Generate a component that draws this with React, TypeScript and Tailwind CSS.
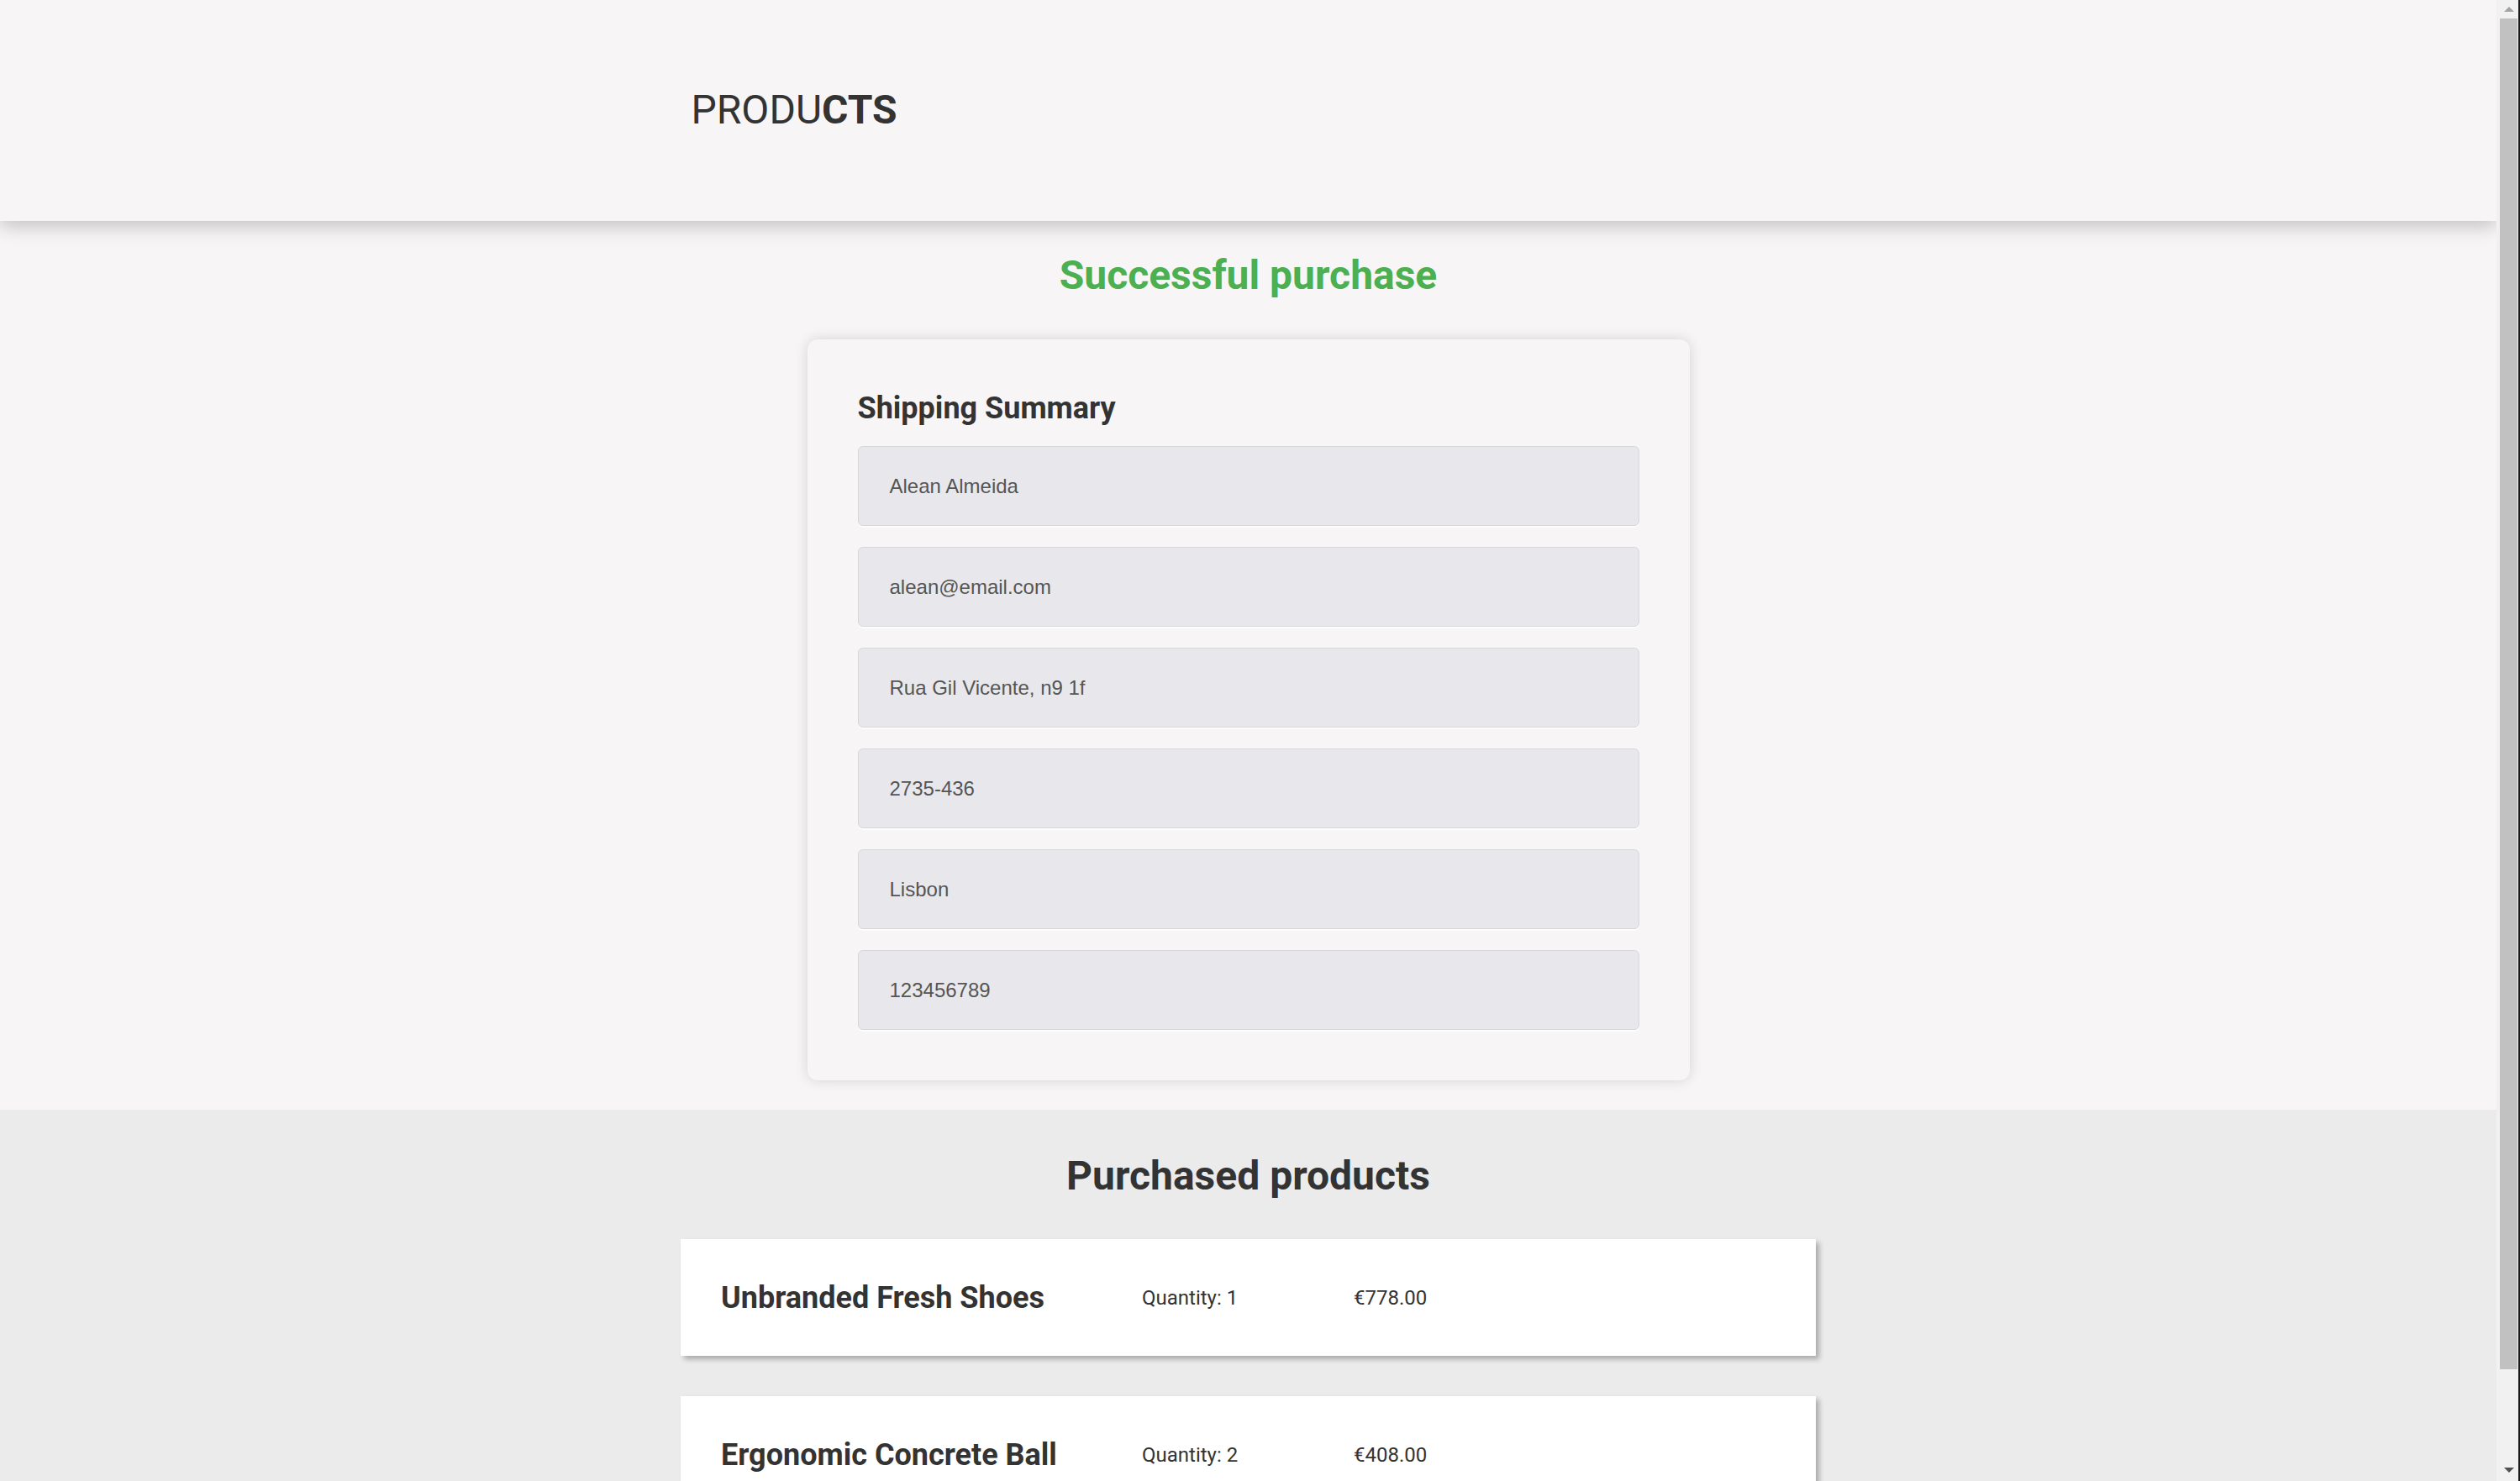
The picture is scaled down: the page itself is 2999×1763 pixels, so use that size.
const shipping = [
    "Alean Almeida",
    "alean@email.com",
    "Rua Gil Vicente, n9 1f",
    "2735-436",
    "Lisbon",
    "123456789",
];

const products = [
    { name: "Unbranded Fresh Shoes", quantity: 1, price: "€778.00" },
    { name: "Ergonomic Concrete Ball", quantity: 2, price: "€408.00" },
];

const ProductRow: React.FC<{ name: string; quantity: number; price: string }> = (p) => {
    return <div className="bg-white h-[139px] flex items-center pl-[48px] shadow-[4px_4px_6px_rgba(0,0,0,0.28)]">
        <h3 className="w-[501px] text-[36px] font-bold text-[#333] font-['Roboto',sans-serif]">{p.name}</h3>
        <span className="w-[252px] text-[24px] text-[#333] font-['Roboto',sans-serif]">Quantity: {p.quantity}</span>
        <span className="text-[24px] text-[#333] font-['Roboto',sans-serif]">{p.price}</span>
    </div>
}

const Scrollbar = () => {
    return <div className="flex h-full shrink-0">
        <div className="w-[26px] h-full bg-[#f1f1f1] flex flex-col items-end">
            <div className="h-[22px] w-[22px] flex items-center justify-center">
                <span className="w-0 h-0 border-l-[6px] border-r-[6px] border-b-[6px] border-l-transparent border-r-transparent border-b-[#a3a3a3]" />
            </div>
            <div className="w-[21px] mr-[1px] h-[1608px] bg-[#c1c1c1]" />
            <div className="flex-1 w-[22px] flex items-end justify-center pb-[10px]">
                <span className="w-0 h-0 border-l-[6px] border-r-[6px] border-t-[6px] border-l-transparent border-r-transparent border-t-[#505050]" />
            </div>
        </div>
        <div className="w-[2px] h-full bg-[#1c1c1c]" />
    </div>
}

export default function App() {
    return <div className="h-[1763px] w-full flex overflow-hidden bg-[#f7f5f6] font-['Roboto',sans-serif]">
        <main className="flex-1 h-full overflow-hidden flex flex-col">
            <header className="h-[263px] shrink-0 bg-[#f7f5f6] flex items-center shadow-[0_6px_22px_rgba(0,0,0,0.22)] relative z-10">
                <div className="w-[1350px] mx-auto pl-[12px]">
                    <h1 className="text-[48px] text-[#333] leading-[1.17] font-normal">PRODU<b className="font-bold">CTS</b></h1>
                </div>
            </header>

            <section className="flex flex-col items-center pt-[37px] pb-[35px]">
                <h2 className="text-[48px] leading-[1.17] font-bold text-[#4caf50]">Successful purchase</h2>
                <div className="mt-[48px] w-[1050px] rounded-[12px] bg-[#f7f5f6] shadow-[0_0_16px_rgba(0,0,0,0.14)] px-[60px] pt-[61px] pb-[60px]">
                    <h3 className="text-[36px] leading-[1.17] font-bold text-[#333]">Shipping Summary</h3>
                    <div className="mt-[24px] flex flex-col gap-[25px]">
                        {shipping.map((v) => (
                            <div key={v} className="h-[95px] rounded-[6px] bg-[#e8e8ec] border border-[#d6d6db] shadow-[0_2px_0_rgba(255,255,255,0.7)] flex items-center pl-[37px] text-[24px] text-[#555] font-['Liberation_Sans',Arial,sans-serif]">
                                {v}
                            </div>
                        ))}
                    </div>
                </div>
            </section>

            <section className="flex-1 bg-[#ebebeb] flex flex-col items-center pt-[51px]">
                <h2 className="text-[48px] leading-[1.17] font-bold text-[#333]">Purchased products</h2>
                <div className="mt-[47px] w-[1351px] flex flex-col gap-[48px]">
                    {products.map((p) => <ProductRow key={p.name} {...p} />)}
                </div>
            </section>
        </main>
        <Scrollbar />
    </div>
}
